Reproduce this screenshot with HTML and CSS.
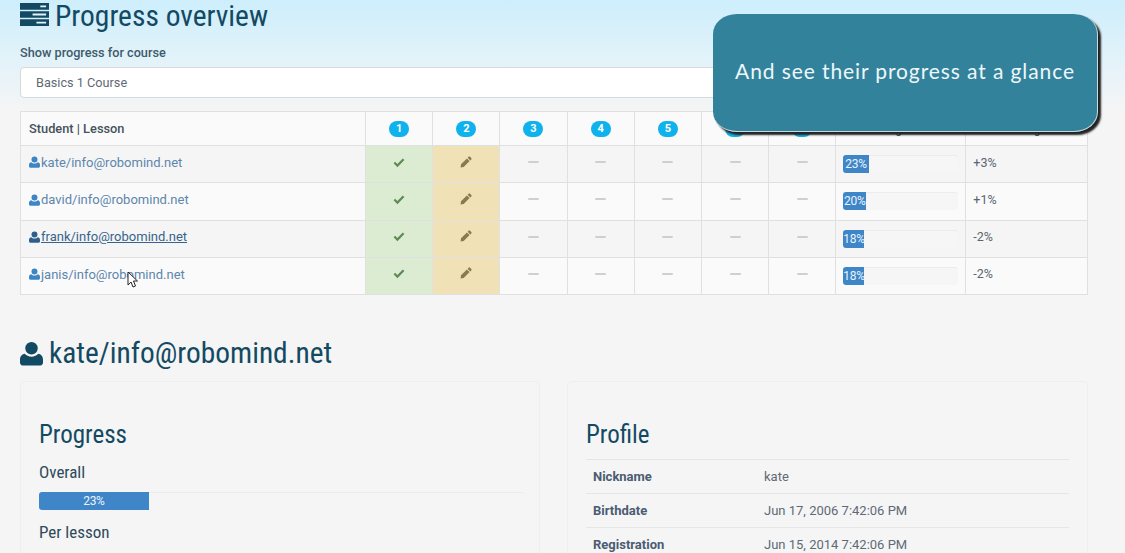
FILE: index.html
```html
<!DOCTYPE html>
<html lang="en">
<head>
<meta charset="utf-8">
<title>Progress overview</title>
<link rel="stylesheet" href="styles.css">
</head>
<body>
<svg class="defs" width="0" height="0" aria-hidden="true">
  <symbol id="user" viewBox="0 0 24 25"><circle cx="12" cy="7" r="6.500"/><path d="M5 12.800c-2.500.5-5 2-5 6.200v3c0 1.700 1.200 3 2.700 3h18.600c1.500 0 2.700-1.300 2.700-3v-3c0-4.200-2.500-5.700-5-6.200-1.500 1.900-4 3-7 3s-5.500-1.100-7-3z"/></symbol>
  <symbol id="check" viewBox="0 0 12 10"><path d="M0.600 5.200 2.100 3.700 4.400 6 9.800.6 11.400 2.100 4.400 9.200z"/></symbol>
  <symbol id="pencil" viewBox="0 0 12 12"><path d="M8.600.7a1 1 0 0 1 1.400 0l1.300 1.300a1 1 0 0 1 0 1.400l-1 1L7.600 1.700zM6.900 2.400l2.700 2.700L3.700 11 .6 11.600 1 8.300z"/></symbol>
</svg>

<main class="page">
  <h1 class="page-title">
    <svg class="server-icon" viewBox="0 0 30 24" preserveAspectRatio="none" aria-hidden="true">
      <path d="M0 0h30v7H0zM0 8.500h30v7H0zM0 17h30v7H0z"/>
      <path class="server-slot" d="M21 2.500h6v2h-6zM13 11h14v2H13zM17 19.500h10v2H17z"/>
    </svg>
    <span>Progress overview</span>
  </h1>

  <label class="course-label" for="course">Show progress for course</label>
  <div class="course-select" id="course">Basics 1 Course</div>

  <table class="grid">
    <thead>
      <tr>
        <th class="c-name">Student | Lesson</th>
        <th class="c-les"><span class="badge">1</span></th>
        <th class="c-les"><span class="badge">2</span></th>
        <th class="c-les"><span class="badge">3</span></th>
        <th class="c-les"><span class="badge">4</span></th>
        <th class="c-les"><span class="badge">5</span></th>
        <th class="c-les"><span class="badge">6</span></th>
        <th class="c-les"><span class="badge">7</span></th>
        <th class="c-prog">Progress</th>
        <th class="c-delta">Change</th>
      </tr>
    </thead>
    <tbody>
      <tr class="odd">
        <td><a class="student" href="#"><svg class="ico-user"><use href="#user"/></svg>kate/info@robomind.net</a></td>
        <td class="done"><svg class="ico-check"><use href="#check"/></svg></td>
        <td class="doing"><svg class="ico-pencil"><use href="#pencil"/></svg></td>
        <td class="todo"><i class="dash"></i></td><td class="todo"><i class="dash"></i></td><td class="todo"><i class="dash"></i></td><td class="todo"><i class="dash"></i></td><td class="todo"><i class="dash"></i></td>
        <td class="cell-bar"><div class="bar"><div class="fill" style="width:22%">23%</div></div></td>
        <td class="delta">+3%</td>
      </tr>
      <tr>
        <td><a class="student" href="#"><svg class="ico-user"><use href="#user"/></svg>david/info@robomind.net</a></td>
        <td class="done"><svg class="ico-check"><use href="#check"/></svg></td>
        <td class="doing"><svg class="ico-pencil"><use href="#pencil"/></svg></td>
        <td class="todo"><i class="dash"></i></td><td class="todo"><i class="dash"></i></td><td class="todo"><i class="dash"></i></td><td class="todo"><i class="dash"></i></td><td class="todo"><i class="dash"></i></td>
        <td class="cell-bar"><div class="bar"><div class="fill" style="width:20%">20%</div></div></td>
        <td class="delta">+1%</td>
      </tr>
      <tr class="odd">
        <td><a class="student hover" href="#"><svg class="ico-user"><use href="#user"/></svg>frank/info@robomind.net</a></td>
        <td class="done"><svg class="ico-check"><use href="#check"/></svg></td>
        <td class="doing"><svg class="ico-pencil"><use href="#pencil"/></svg></td>
        <td class="todo"><i class="dash"></i></td><td class="todo"><i class="dash"></i></td><td class="todo"><i class="dash"></i></td><td class="todo"><i class="dash"></i></td><td class="todo"><i class="dash"></i></td>
        <td class="cell-bar"><div class="bar"><div class="fill" style="width:18%">18%</div></div></td>
        <td class="delta">-2%</td>
      </tr>
      <tr>
        <td><a class="student" href="#"><svg class="ico-user"><use href="#user"/></svg>janis/info@robomind.net</a></td>
        <td class="done"><svg class="ico-check"><use href="#check"/></svg></td>
        <td class="doing"><svg class="ico-pencil"><use href="#pencil"/></svg></td>
        <td class="todo"><i class="dash"></i></td><td class="todo"><i class="dash"></i></td><td class="todo"><i class="dash"></i></td><td class="todo"><i class="dash"></i></td><td class="todo"><i class="dash"></i></td>
        <td class="cell-bar"><div class="bar"><div class="fill" style="width:18%">18%</div></div></td>
        <td class="delta">-2%</td>
      </tr>
    </tbody>
  </table>

  <h2 class="student-title"><svg class="ico-user-lg"><use href="#user"/></svg><span>kate/info@robomind.net</span></h2>

  <div class="panels">
    <section class="panel">
      <h3 class="panel-title">Progress</h3>
      <h4 class="sub">Overall</h4>
      <div class="bar bar-wide"><div class="fill" style="width:22.600%">23%</div></div>
      <h4 class="sub sub-next">Per lesson</h4>
    </section>
    <section class="panel">
      <h3 class="panel-title">Profile</h3>
      <dl class="profile">
        <div class="profile-row"><dt>Nickname</dt><dd>kate</dd></div>
        <div class="profile-row"><dt>Birthdate</dt><dd>Jun 17, 2006 7:42:06 PM</dd></div>
        <div class="profile-row"><dt>Registration</dt><dd>Jun 15, 2014 7:42:06 PM</dd></div>
      </dl>
    </section>
  </div>
</main>

<div class="callout">And see their progress at a glance</div>

<svg class="cursor" viewBox="0 0 12 18" aria-hidden="true"><path d="M1 1v13l3-3 2 5 2.500-1-2-5h4z"/></svg>
</body>
</html>
```

FILE: styles.css
```css
html, body {
  margin: 0;
  height: 553px;
  overflow: hidden;
}
body {
  position: relative;
  background: linear-gradient(180deg, #cdeefc 0, #dff2fa 50px, #f5f5f5 112px);
  font-family: Roboto, "Liberation Sans", sans-serif;
  font-size: 13px;
  color: #4a5a68;
}
.defs { position: absolute; }
.page {
  width: 1068px;
  padding: 0 37px 0 20px;
}
.page-title, .student-title, .panel-title, .sub {
  font-family: "Roboto Condensed", Roboto, sans-serif;
  font-stretch: 75%;
  font-weight: 400;
  color: #134a63;
  margin: 0;
}
.page-title {
  display: flex;
  align-items: center;
  gap: 6px;
  height: 33px;
  font-size: 29.500px;
  line-height: 33px;
}
.server-icon { width: 29px; height: 23px; fill: #134a63; margin-top: -4px; }
.server-slot { fill: #e3f3fa; }
.course-label {
  display: block;
  margin-top: 12px;
  font-size: 12.700px;
  font-weight: 500;
  line-height: 15px;
  color: #3f5a6c;
}
.course-select {
  box-sizing: border-box;
  height: 31px;
  margin-top: 7px;
  padding: 0 15px;
  line-height: 30px;
  font-size: 12.700px;
  color: #5f6a72;
  background: #fff;
  border: 1px solid #d6dadd;
  border-radius: 4px;
}
.grid {
  width: 1068px;
  margin-top: 13px;
  table-layout: fixed;
  border-collapse: collapse;
  background: #fafafa;
}
.grid th, .grid td {
  border: 1px solid #e0e0e0;
  padding: 0;
  text-align: center;
  vertical-align: middle;
}
.grid thead tr { height: 34px; }
.grid tbody tr { height: 37.250px; }
.grid .odd td { background: #f5f5f5; }
.c-name { width: 345px; }
.grid th.c-name, .grid tbody td:first-child { text-align: left; padding-left: 8px; box-sizing: border-box; }
.c-name { font-size: 12.800px; font-weight: 500; color: #45525c; }
.c-les { width: 66.200px; }
.c-prog { width: 129px; font-size: 12px; font-weight: 500; }
.c-delta { font-size: 12px; font-weight: 500; }
.badge {
  display: inline-block;
  width: 20px;
  height: 16px;
  border-radius: 8px;
  background: #0fb2ec;
  color: #fff;
  font-size: 11px;
  font-weight: 700;
  line-height: 16px;
}
.student {
  display: inline-flex;
  align-items: center;
  gap: 1px;
  position: relative;
  top: -1px;
  font-size: 13px;
  color: #5d86ad;
  text-decoration: none;
}
.student.hover { color: #37648c; text-decoration: underline; }
.ico-user { width: 11px; height: 12px; fill: #3d86c6; }
.hover .ico-user { fill: #2c5f8e; }
.grid td.done, .grid .odd td.done { background: #dcecd3; }
.grid td.doing, .grid .odd td.doing { background: #f0e2b6; }
.ico-check { width: 12px; height: 10px; fill: #5d8a55; position: relative; top: -1px; }
.ico-pencil { width: 12px; height: 12px; fill: #8a7a52; position: relative; top: -1px; }
.dash {
  display: block;
  width: 11px;
  height: 2px;
  margin: -3px auto 0;
  background: #cfcfcf;
  border-radius: 1px;
}
.grid td.cell-bar { padding: 0 7px; }
.bar {
  height: 18px;
  background: #f6f6f6;
  border-top: 1px solid #ececec;
  box-sizing: border-box;
  border-radius: 3px;
}
.fill {
  height: 18px;
  margin-top: -1px;
  background: #3f86c8;
  border-radius: 3px 0 0 3px;
  color: #eaf3fb;
  font-size: 12px;
  letter-spacing: -.3px;
  line-height: 19px;
  text-align: center;
  white-space: nowrap;
  overflow: hidden;
}
.grid td.delta { text-align: left; padding: 0 0 4px 7px; font-size: 12.500px; color: #5b6670; }
.student-title {
  display: flex;
  align-items: center;
  gap: 6px;
  margin-top: 40px;
  height: 36px;
  font-size: 29.400px;
  line-height: 36px;
}
.ico-user-lg { width: 23px; height: 25px; fill: #134a63; }
.panels {
  display: grid;
  grid-template-columns: 520px 521px;
  gap: 27px;
  margin-top: 10px;
}
.panel {
  box-sizing: border-box;
  height: 300px;
  padding: 36px 18px 0;
  border: 1px solid #eeeeee;
  border-radius: 4px;
}
.panel-title { font-size: 25px; line-height: 34px; }
.sub { font-size: 17px; line-height: 22px; margin-top: 9px; color: #2d4a5a; }
.bar-wide { margin-top: 9px; width: 486px; background: transparent; }
.sub-next { margin-top: 11px; }
.profile { margin: 7px 0 0; }
.profile-row {
  display: flex;
  height: 34px;
  box-sizing: border-box;
  padding-left: 7px;
  align-items: center;
  border-top: 1px solid #e6e6e6;
  font-size: 13px;
}
.profile-row dt { width: 171px; font-weight: 700; color: #4a5c72; }
.profile-row dd { margin: 0; color: #5f6a75; }
.callout {
  position: absolute;
  left: 713px;
  top: 14px;
  width: 385px;
  height: 118px;
  box-sizing: border-box;
  padding-bottom: 4px;
  display: flex;
  align-items: center;
  justify-content: center;
  background: #33829c;
  border-radius: 24px / 20px;
  border-right: 1px solid #c8dbe2;
  border-bottom: 1px solid #c8dbe2;
  box-shadow: 3px 3px 2px #222;
  color: #eef7fa;
  font-family: Lato, sans-serif;
  font-size: 21px;
  letter-spacing: .9px;
}
.cursor {
  position: absolute;
  left: 127px;
  top: 271px;
  width: 12px;
  height: 18px;
  fill: #fff;
  stroke: #222;
  stroke-width: 1;
}
```
